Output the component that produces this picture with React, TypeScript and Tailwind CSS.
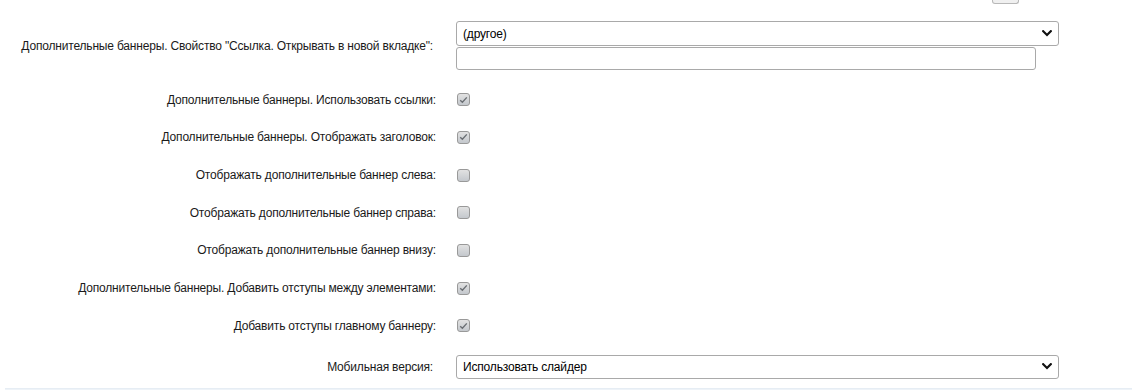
import React from "react";

const font = { fontFamily: '"Liberation Sans", Arial, sans-serif' };

function Chevron() {
  return (
    <svg width="10" height="7" viewBox="0 0 10 7" className="shrink-0">
      <path d="M1.2 1.2 L5 5 L8.8 1.2" fill="none" stroke="#111" strokeWidth="2.2" strokeLinecap="square" />
    </svg>
  );
}

function Select({ value, h }: { value: string; h: string }) {
  return (
    <div className={`flex w-[603px] items-center justify-between rounded-[3px] border border-[#a9a9a9] bg-white pl-[6px] pr-[6px] text-[12px] text-black ${h}`}>
      <span>{value}</span>
      <Chevron />
    </div>
  );
}

function Checkbox({ checked }: { checked: boolean }) {
  return (
    <div className="flex h-[13px] w-[13px] items-center justify-center rounded-[3px] border border-[#999] bg-gradient-to-b from-[#e2e2e2] to-[#c4c8cd]">
      {checked && (
        <svg width="9" height="8" viewBox="0 0 9 8">
          <path d="M1.2 4.2 L3.4 6.3 L7.8 1.4" fill="none" stroke="#6a6e73" strokeWidth="1.4" />
        </svg>
      )}
    </div>
  );
}

const rows: [string, boolean][] = [
  ["Дополнительные баннеры. Использовать ссылки:", true],
  ["Дополнительные баннеры. Отображать заголовок:", true],
  ["Отображать дополнительные баннер слева:", false],
  ["Отображать дополнительные баннер справа:", false],
  ["Отображать дополнительные баннер внизу:", false],
  ["Дополнительные баннеры. Добавить отступы между элементами:", true],
  ["Добавить отступы главному баннеру:", true],
];

export default function App() {
  return (
    <div className="h-[390px] w-[1132px] overflow-hidden bg-white text-[12px] tracking-[-0.18px] text-[#1a1a1a]" style={font}>
      <div className="flex h-[4px] justify-end pr-[113px]">
        <div className="h-[4px] w-[27px] rounded-b-[3px] border-x border-b border-[#b8b8b8] bg-[#f0f0f0]" />
      </div>
      <div className="pt-[17px]">
        <div className="flex items-center">
          <div className="w-[441px] pr-[8px] text-right">Дополнительные баннеры. Свойство "Ссылка. Открывать в новой вкладке":</div>
          <div className="ml-[15px] flex flex-col">
            <Select value="(другое)" h="h-[25px]" />
            <div className="mt-[1px] h-[23px] w-[580px] rounded-[3px] border border-[#a9a9a9] bg-white" />
          </div>
        </div>
        <div className="mt-[11px]">
          {rows.map(([label, checked]) => (
            <div key={label} className="flex h-[37.67px] items-center">
              <div className="w-[441px] pr-[5px] text-right">{label}</div>
              <div className="ml-[16px]">
                <Checkbox checked={checked} />
              </div>
            </div>
          ))}
        </div>
        <div className="mt-[10px] flex items-center">
          <div className="w-[441px] pr-[8px] text-right">Мобильная версия:</div>
          <div className="ml-[15px]">
            <Select value="Использовать слайдер" h="h-[24px]" />
          </div>
        </div>
        <div className="ml-[5px] mt-[9px] h-[3px] border-t border-[#e6edf4] bg-[#eef3f8]" />
      </div>
    </div>
  );
}
